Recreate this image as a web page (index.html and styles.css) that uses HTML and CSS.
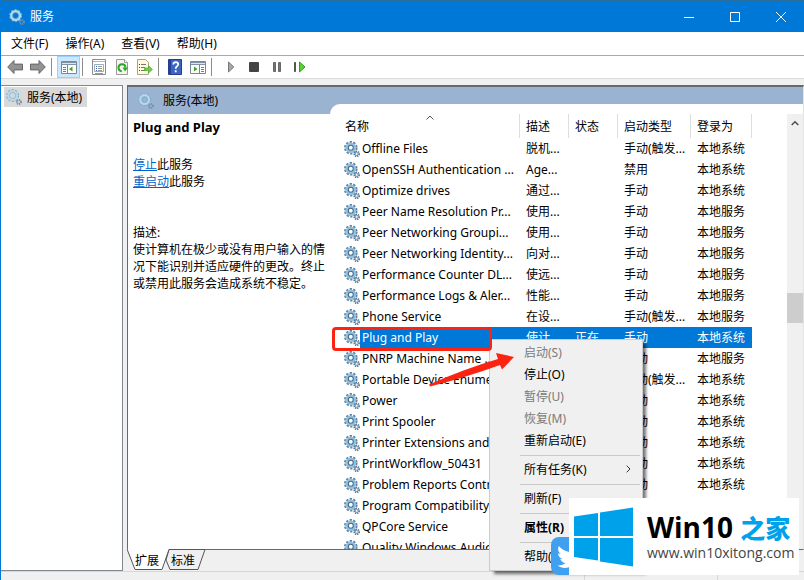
FILE: index.html
```html
<!DOCTYPE html>
<html lang="zh-CN">
<head>
<meta charset="utf-8">
<title>服务</title>
<link rel="stylesheet" href="styles.css">
</head>
<body>
<svg class="defs" aria-hidden="true">
  <symbol id="gear" viewBox="0 0 16 16">
    <circle cx="12.7" cy="12.8" r="2.3" fill="none" stroke="#4f6f8c" stroke-width="2" stroke-dasharray="1.1 .7"/>
    <circle cx="12.7" cy="12.8" r="1.5" fill="none" stroke="#8fabc2" stroke-width="1.2"/>
    <circle cx="6.8" cy="6.8" r="5.7" fill="none" stroke="#5d83a3" stroke-width="2.2" stroke-dasharray="2.2 1.38"/>
    <circle cx="6.8" cy="6.8" r="4" fill="#fff" stroke="#92bfdb" stroke-width="2.8"/>
    <circle cx="6.8" cy="6.8" r="2.5" fill="#fff" stroke="#44698a" stroke-width="1.1"/>
  </symbol>
  <symbol id="gear-plain" viewBox="0 0 16 16">
    <circle cx="12.9" cy="12.9" r="2" fill="none" stroke="#7392ad" stroke-width="2" stroke-dasharray="1.1 .6"/>
    <circle cx="6.6" cy="6.6" r="5.5" fill="none" stroke="#83adc9" stroke-width="2" stroke-dasharray="2.1 1.36"/>
    <circle cx="6.6" cy="6.6" r="4.300" fill="none" stroke="#b3d9ea" stroke-width="2.400"/>
    <circle cx="6.6" cy="6.6" r="3" fill="none" stroke="#7ba3bf" stroke-width=".6"/>
  </symbol>
</svg>

<div class="window">
  <header class="titlebar">
    <svg class="title-icon"><use href="#gear-plain"/></svg>
    <h1>服务</h1>
    <button aria-label="最小化"><svg viewBox="0 0 12 12"><path d="M1 6.5h10"/></svg></button>
    <button aria-label="最大化"><svg viewBox="0 0 12 12"><path d="M1.5 1.5h9v9h-9z"/></svg></button>
    <button aria-label="关闭"><svg viewBox="0 0 12 12"><path d="M1 1l10 10M11 1L1 11"/></svg></button>
  </header>

  <nav class="menubar">
    <button>文件(F)</button><button>操作(A)</button><button>查看(V)</button><button>帮助(H)</button>
  </nav>

  <div class="toolbar">
    <button aria-label="后退"><svg viewBox="0 0 16 16"><path d="M.7 8L7 1.500v3.600h8.500v5.800H7v3.600z" fill="#939393" stroke="#666"/></svg></button>
    <button aria-label="前进"><svg viewBox="0 0 16 16"><path d="M15.300 8L9 1.500v3.600H.5v5.800H9v3.600z" fill="#939393" stroke="#666"/></svg></button>
    <i></i>
    <button class="on" aria-label="显示/隐藏控制台树"><svg viewBox="0 0 16 16"><path d="M.5 2.500h15v12H.5z" fill="#fff" stroke="#7a8796"/><path d="M1 3h14v3H1z" fill="#8393a5"/><path d="M1 4.500h14" stroke="#dde3ea"/><path d="M6.500 6v8" stroke="#7a8796"/><path d="M2 8.500h3M2 10.500h3M2 12.500h3" stroke="#4a86c5"/><path d="M11.500 7.500v5L8 10z" fill="#36a82b"/></svg></button>
    <i></i>
    <button aria-label="属性"><svg viewBox="0 0 16 16"><path d="M1.500.5h13v15h-13z" fill="#fff" stroke="#8c8c8c"/><path d="M2 2.500h12" stroke="#b4b4b4"/><path d="M3.500 5.500h9v7h-9z" fill="#fff" stroke="#9aa9bb"/><path d="M5 7.500h1M5 9.500h1M5 11.500h1" stroke="#2b6cb8"/><path d="M7 7.500h4M7 9.500h4M7 11.500h4M4 14.500h8" stroke="#999"/></svg></button>
    <button aria-label="刷新"><svg viewBox="0 0 16 16"><path d="M2.500.5h8l3 3v12h-11z" fill="#f7f7ed" stroke="#999"/><path d="M10.500.5v3h3" fill="#fff" stroke="#999"/><path d="M7.800 12.200A3.500 3.500 0 1 1 11.500 8.500" fill="none" stroke="#2fa52d" stroke-width="2"/><path d="M8.500 8.500H14L11 12.500z" fill="#2fa52d"/></svg></button>
    <button aria-label="导出列表"><svg viewBox="0 0 16 16"><path d="M.5.5h8l3 3v12H.5z" fill="#fffbdc" stroke="#aaa38a"/><path d="M2 5.500h1M2 8.500h1M2 11.500h1" stroke="#444"/><path d="M4 5.500h5M4 8.500h4M4 11.500h5" stroke="#777"/><path d="M7.500 9h4V6.500L15.500 10.500 11.500 14v-2.500h-4z" fill="#69cf43" stroke="#4aa42f" stroke-width=".6"/></svg></button>
    <i></i>
    <button aria-label="帮助"><svg viewBox="0 0 16 16"><path d="M1.500.5h13v15h-13z" fill="#3b64c3" stroke="#243f91"/><path d="M2 1h2v14H2z" fill="#234193"/><path d="M6.300 5.500Q6.500 3.200 8.800 3.200 11.200 3.300 11.200 5.300 11.200 6.500 9.800 7.400 8.700 8.200 8.700 9.800M8.700 11.300v2" fill="none" stroke="#fff" stroke-width="1.800"/></svg></button>
    <button aria-label="显示/隐藏操作窗格"><svg viewBox="0 0 16 16"><path d="M.5 2.500h15v12H.5z" fill="#fff" stroke="#7a8796"/><path d="M1 3h14v3H1z" fill="#8393a5"/><path d="M1 4.500h14" stroke="#dde3ea"/><path d="M9.500 6v8" stroke="#7a8796"/><path d="M11 8.500h3M11 10.500h3M11 12.500h3" stroke="#4a86c5"/><path d="M4 7.500v5L7.500 10z" fill="#36a82b"/></svg></button>
    <i class="wide"></i>
    <button aria-label="启动服务"><svg viewBox="0 0 16 16"><path d="M5.500 3v10L10.800 8z" fill="#a8a8a8" stroke="#777"/></svg></button>
    <button aria-label="停止服务"><svg viewBox="0 0 16 16"><rect x="3" y="3" width="10" height="10" rx="1" fill="#444"/></svg></button>
    <button aria-label="暂停服务"><svg viewBox="0 0 16 16"><path d="M4.500 3.500h2v9h-2zM9.500 3.500h2v9h-2z" fill="#777" stroke="#666"/></svg></button>
    <button aria-label="重新启动服务"><svg viewBox="0 0 16 16"><path d="M2.500 3.500h1v9h-1z" stroke="#555"/><path d="M7.500 3v10L13 8z" fill="#5ad332" stroke="#2f9d22"/></svg></button>
  </div>

  <main class="panes">
    <aside class="tree">
      <a class="node" href="#services"><svg><use href="#gear-plain"/></svg>服务(本地)</a>
    </aside>

    <section class="right" id="services">
      <div class="snapin">
        <div class="info">
          <h2><svg><use href="#gear-plain"/></svg>服务(本地)</h2>
          <div class="detail">
            <h3>Plug and Play</h3>
            <p><a href="#stop">停止</a>此服务<br><a href="#restart">重启动</a>此服务</p>
            <p class="desc">描述:<br>使计算机在极少或没有用户输入的情况下能识别并适应硬件的更改。终止或禁用此服务会造成系统不稳定。</p>
          </div>
        </div>
        <div class="list">
          <div class="rows">
          <table>
            <colgroup><col class="c-name"><col class="c-desc"><col class="c-state"><col class="c-start"><col class="c-logon"></colgroup>
            <thead><tr><th>名称<svg class="sort" viewBox="0 0 8 5"><path d="M.5 4.500L4 1l3.500 3.500"/></svg></th><th>描述</th><th>状态</th><th>启动类型</th><th>登录为</th></tr></thead>
            <tbody>
              <tr><td><div><svg><use href="#gear"/></svg><span>Offline Files</span></div></td><td>脱机...</td><td></td><td>手动(触发...</td><td>本地系统</td></tr>
              <tr><td><div><svg><use href="#gear"/></svg><span>OpenSSH Authentication ...</span></div></td><td>Age...</td><td></td><td>禁用</td><td>本地系统</td></tr>
              <tr><td><div><svg><use href="#gear"/></svg><span>Optimize drives</span></div></td><td>通过...</td><td></td><td>手动</td><td>本地系统</td></tr>
              <tr><td><div><svg><use href="#gear"/></svg><span>Peer Name Resolution Pr...</span></div></td><td>使用...</td><td></td><td>手动</td><td>本地服务</td></tr>
              <tr><td><div><svg><use href="#gear"/></svg><span>Peer Networking Groupi...</span></div></td><td>使用...</td><td></td><td>手动</td><td>本地服务</td></tr>
              <tr><td><div><svg><use href="#gear"/></svg><span>Peer Networking Identity...</span></div></td><td>向对...</td><td></td><td>手动</td><td>本地服务</td></tr>
              <tr><td><div><svg><use href="#gear"/></svg><span>Performance Counter DL...</span></div></td><td>使远...</td><td></td><td>手动</td><td>本地服务</td></tr>
              <tr><td><div><svg><use href="#gear"/></svg><span>Performance Logs &amp; Aler...</span></div></td><td>性能...</td><td></td><td>手动</td><td>本地服务</td></tr>
              <tr><td><div><svg><use href="#gear"/></svg><span>Phone Service</span></div></td><td>在设...</td><td></td><td>手动(触发...</td><td>本地服务</td></tr>
              <tr class="selected"><td><div><svg><use href="#gear"/></svg><span>Plug and Play</span></div></td><td>使计...</td><td>正在...</td><td>手动</td><td>本地系统</td></tr>
              <tr><td><div><svg><use href="#gear"/></svg><span>PNRP Machine Name ...</span></div></td><td></td><td></td><td>手动</td><td>本地服务</td></tr>
              <tr><td><div><svg><use href="#gear"/></svg><span>Portable Device Enumer...</span></div></td><td></td><td></td><td>手动(触发...</td><td>本地系统</td></tr>
              <tr><td><div><svg><use href="#gear"/></svg><span>Power</span></div></td><td></td><td></td><td>自动</td><td>本地系统</td></tr>
              <tr><td><div><svg><use href="#gear"/></svg><span>Print Spooler</span></div></td><td></td><td></td><td>自动</td><td>本地系统</td></tr>
              <tr><td><div><svg><use href="#gear"/></svg><span>Printer Extensions and ...</span></div></td><td></td><td></td><td>手动</td><td>本地系统</td></tr>
              <tr><td><div><svg><use href="#gear"/></svg><span>PrintWorkflow_50431</span></div></td><td></td><td></td><td>手动</td><td>本地系统</td></tr>
              <tr><td><div><svg><use href="#gear"/></svg><span>Problem Reports Contro...</span></div></td><td></td><td></td><td>手动</td><td>本地系统</td></tr>
              <tr><td><div><svg><use href="#gear"/></svg><span>Program Compatibility ...</span></div></td><td></td><td></td><td></td><td></td></tr>
              <tr><td><div><svg><use href="#gear"/></svg><span>QPCore Service</span></div></td><td></td><td></td><td></td><td></td></tr>
              <tr><td><div><svg><use href="#gear"/></svg><span>Quality Windows Audio...</span></div></td><td></td><td></td><td></td><td></td></tr>
            </tbody>
          </table>
          </div>
          <div class="scrollbar">
            <svg viewBox="0 0 8 6"><path d="M.7 5L4 1.700 7.300 5"/></svg>
            <div class="thumb"></div>
          </div>
        </div>
      </div>
      <div class="tabs">
        <svg viewBox="0 0 80 21" aria-hidden="true"><path d="M42 .5H78L71 20.500H43L39 11z" fill="#f0f0f0" stroke="#555"/><path d="M0 0L8 20.500H35L42 0z" fill="#fff"/><path d="M0 0L8 20.500H35L42 .5" fill="none" stroke="#555"/></svg>
        <button>扩展</button><button>标准</button>
      </div>
    </section>
  </main>
  <footer class="status"><span></span><span></span><span></span></footer>
</div>

<div class="highlight"></div>

<div class="context" role="menu">
  <button disabled>启动(S)</button>
  <button>停止(O)</button>
  <button disabled>暂停(U)</button>
  <button disabled>恢复(M)</button>
  <button>重新启动(E)</button>
  <hr>
  <button>所有任务(K)<svg viewBox="0 0 5 8"><path d="M.7.7L4 4 .7 7.300"/></svg></button>
  <hr>
  <button>刷新(F)</button>
  <hr>
  <button class="default">属性(R)</button>
  <hr>
  <button>帮助(H)</button>
</div>

<svg class="arrow" viewBox="0 0 86 35" aria-hidden="true"><path d="M0 32.500Q35 17 69 7L67 1 85 5 73 17.500 71 13Q35 26 1 34.500Z" fill="#fb2412"/></svg>

<div class="bird"><svg viewBox="0 0 24 24"><path d="M2 19.500c2.500.2 4.800-.5 6.500-1.900-2-.1-3.700-1.400-4.300-3.200.7.1 1.400.1 2-.1C4 13.800 2.500 12 2.500 9.700c.6.300 1.300.5 2 .6C2.400 8.800 1.900 6.100 3.100 4c2.300 2.900 5.700 4.700 9.500 4.900C12 6 14 3 17.200 3c1.400 0 2.600.6 3.500 1.500L23 4l-1.500 3c.5 8-7 14.500-13.500 14.500-2.200 0-4.300-.7-6-2z" fill="#fff"/></svg></div>
<div class="brand">
  <svg viewBox="0 0 60 60"><path d="M1 9.500L25 6v23H1zM27 5.500L60 .5V29H27zM1 31h24v22.500L1 50zM27 31h33v28.500L27 54.500z" fill="#00a1eb"/></svg>
  <div><strong>Win10 <b>之家</b></strong><span>www.win10xitong.com</span></div>
</div>
</body>
</html>
```
FILE: styles.css
```css
* { box-sizing: border-box; }

body {
  margin: 0;
  background: #f0f0f0;
  color: #000;
  font: 12px/17px "Noto Sans", "Noto Sans CJK SC", sans-serif;
  overflow: hidden;
}

button {
  border: 0;
  padding: 0;
  background: none;
  font: inherit;
  color: inherit;
}

h1, h2, h3, p { margin: 0; font-size: 12px; font-weight: 400; }
svg { display: block; flex: none; }
.defs { position: absolute; width: 0; height: 0; }

.window {
  height: 100vh;
  display: flex;
  flex-direction: column;
  border-left: 1px solid #0078d7;
}

/* Title bar */
.titlebar {
  height: 32px;
  flex: none;
  display: flex;
  align-items: center;
  background: #0078d7;
  border-top: 1px solid #2a6f9e;
  color: #fff;
  padding-left: 8px;
}
.titlebar h1 { flex: 1; margin-left: 5px; }
.title-icon { width: 16px; height: 16px; }
.titlebar button { width: 46px; height: 31px; display: grid; place-items: center; }
.titlebar button svg { width: 12px; height: 12px; fill: none; stroke: #fff; }

/* Menu bar and toolbar */
.menubar {
  height: 24px;
  flex: none;
  display: flex;
  gap: 17px;
  padding-left: 10px;
  background: #fff;
  border-bottom: 1px solid #a9a9a9;
}
.toolbar {
  height: 23px;
  flex: none;
  display: flex;
  align-items: center;
  padding-left: 2px;
  background: #fff;
  border-bottom: 1px solid #dcdcdc;
}
.toolbar button { width: 23px; height: 22px; display: grid; place-items: center; }
.toolbar svg { width: 16px; height: 16px; }
.toolbar i { width: 1px; height: 18px; margin: 0 4px 0 2px; background: #8c8c8c; }
.toolbar i.wide { margin-right: 7px; }
.toolbar .on { background: #cce8ff; border: 1px solid #99d1ff; margin-left: 1px; }

/* Panes */
.panes {
  flex: 1;
  min-height: 0;
  display: grid;
  grid-template-columns: 122px minmax(0, 1fr);
  gap: 4px;
  padding-top: 6px;
}
.tree { background: #fff; border: 1px solid #828790; border-left: 0; padding: 1px 3px; }
.node {
  display: inline-flex;
  align-items: center;
  gap: 5px;
  height: 20px;
  padding: 0 5px 0 2px;
  background: #d9d9d9;
  color: #000;
  text-decoration: none;
}
.node svg, h2 svg { width: 16px; height: 16px; }

.right { display: flex; flex-direction: column; min-height: 0; }
.snapin {
  flex: 1;
  min-height: 0;
  display: grid;
  grid-template-columns: 202px minmax(0, 1fr);
  background: #99b3d1;
  border: 1px solid #696969;
  border-width: 2px 1px 1px;
  border-right-color: #e3e3e3;
}
.info { display: flex; flex-direction: column; }
h2 { height: 27px; display: flex; align-items: center; gap: 9px; padding-left: 10px; }
.detail { flex: 1; background: #fff; padding: 5px 4px 0 5px; }
h3 { font-size: 13px; font-weight: 700; margin-bottom: 20px; }
.detail a { color: #0066cc; }
.desc { margin-top: 34px; }

.list {
  margin-top: 17px;
  padding-top: 10px;
  min-height: 0;
  display: flex;
  background: #fff;
  border-top-left-radius: 10px;
}
.rows { flex: 1; min-width: 0; overflow: hidden; }
table { width: 422px; table-layout: fixed; border-collapse: separate; border-spacing: 0; }
.c-name { width: 190px; }
.c-desc { width: 49px; }
.c-state { width: 49px; }
.c-start { width: 73px; }
.c-logon { width: 61px; }
th {
  height: 24px;
  padding: 0 0 0 6px;
  border-right: 1px solid #dedede;
  text-align: left;
  font-weight: 400;
}
th:first-child { padding-left: 15px; position: relative; }
.sort { position: absolute; left: 96px; top: 1px; width: 8px; height: 5px; fill: none; stroke: #555; }
td { height: 21px; padding: 0 0 0 6px; white-space: nowrap; }
td:first-child { padding: 0 0 0 14px; }
td div { display: flex; align-items: center; }
td svg { width: 16px; height: 16px; }
td span { flex: 1; padding-left: 2px; line-height: 21px; }
.selected td { background: #0078d7; color: #fff; }
.selected td:first-child { background: none; }
.selected span { background: #0078d7; }

.scrollbar { width: 16px; background: #f0f0f0; }
.scrollbar svg { width: 8px; height: 6px; margin: 6px 4px 0; fill: none; stroke: #505050; stroke-width: 1.5; }
.thumb { height: 30px; margin-top: 167px; background: #cdcdcd; }

.tabs { height: 21px; flex: none; display: flex; position: relative; padding-left: 8px; gap: 12px; }
.tabs svg { position: absolute; left: 0; top: -1px; width: 80px; height: 21px; }
.tabs button { position: relative; height: 20px; }

.status { height: 9px; flex: none; display: flex; border-top: 1px solid #d7d7d7; }
.status span { border-right: 1px solid #d7d7d7; margin-top: 1px; width: 133px; }
.status span:first-child { width: auto; flex: 1; }
.status span:last-child { width: 86px; border: 0; }

/* Overlays */
.highlight {
  position: absolute;
  left: 332px;
  top: 327px;
  width: 160px;
  height: 24px;
  border: 3px solid #fb2412;
  border-radius: 4px;
  z-index: 1;
}
.context {
  position: absolute;
  left: 489px;
  top: 339px;
  width: 154px;
  padding: 2px;
  background: #f0f0f0;
  border: 1px solid #ccc;
  box-shadow: 4px 4px 3px -1px rgba(0, 0, 0, .55);
}
.context button {
  width: 100%;
  height: 22px;
  display: flex;
  align-items: center;
  justify-content: space-between;
  padding: 0 9px 2px 32px;
  text-align: left;
}
.context button:disabled { color: #7a7a7a; }
.context svg { width: 5px; height: 8px; fill: none; stroke: #333; }
.context hr { height: 1px; margin: 3px 0 3px 28px; border: 0; background: #c8c8c8; }
.context .default { font-weight: 700; }
.arrow { position: absolute; left: 429px; top: 352px; width: 86px; height: 35px; }

.bird {
  position: absolute;
  left: 551px;
  top: 537px;
  width: 38px;
  height: 38px;
  border-radius: 8px;
  background: #419ff0;
  display: grid;
  place-items: center;
}
.bird svg { width: 30px; height: 30px; }
.brand {
  position: absolute;
  left: 569px;
  top: 498px;
  width: 230px;
  height: 77px;
  display: flex;
  align-items: center;
  gap: 14px;
  padding-left: 4px;
  background: #fff;
}
.brand svg { width: 60px; height: 60px; }
.brand div { display: flex; flex-direction: column; white-space: nowrap; }
.brand strong { font: 700 28px/32px "Open Sans", "Noto Sans CJK SC", sans-serif; }
.brand b { color: #00a1eb; font-size: 25px; }
.brand span { font: 14px/18px "Open Sans", sans-serif; color: #444; }
```
